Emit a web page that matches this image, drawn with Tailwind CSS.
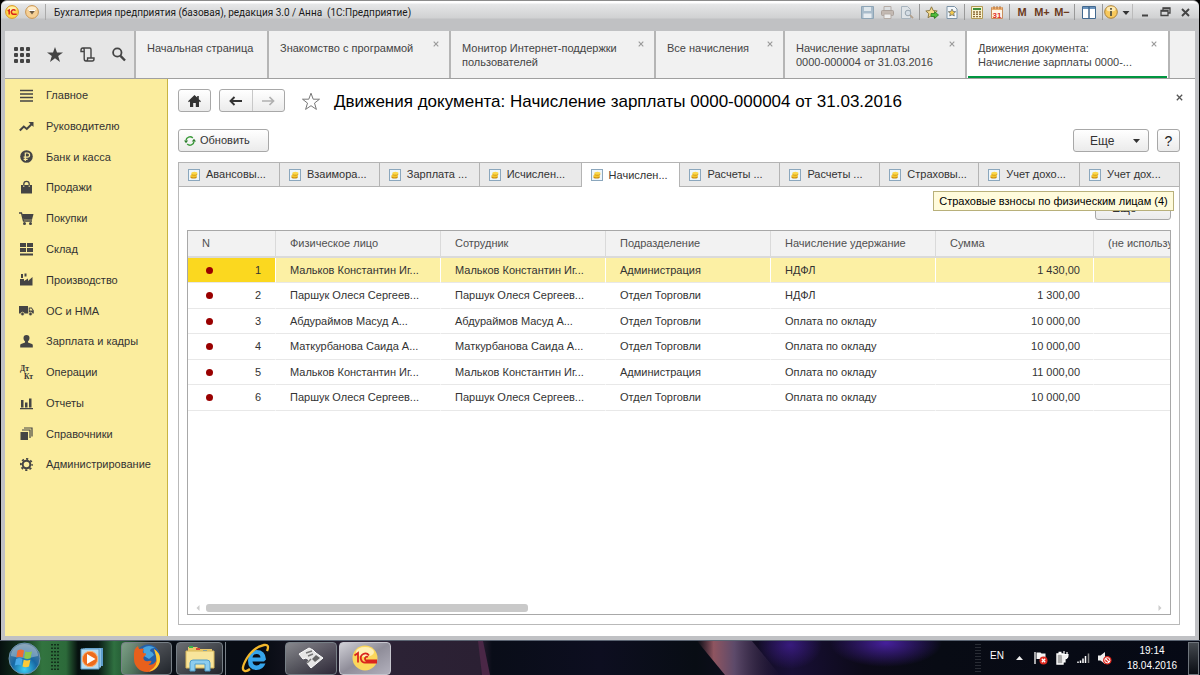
<!DOCTYPE html>
<html lang="ru">
<head>
<meta charset="utf-8">
<title>Бухгалтерия предприятия</title>
<script src="https://cdn.jsdelivr.net/npm/@tailwindcss/browser@4"></script>
</head>
<body class="flex h-screen flex-col overflow-hidden bg-black font-['Liberation_Sans',Arial,sans-serif] text-[11px] text-[#333]">

<svg class="hidden" aria-hidden="true">
  <symbol id="coins" viewBox="0 0 12 12"><rect x=".5" y=".5" width="11" height="11" fill="#eef6fb" stroke="#8ba7bd"/><ellipse cx="5.6" cy="8" rx="3.2" ry="1.6" fill="#c98a0c"/><ellipse cx="5.6" cy="6.8" rx="3.2" ry="1.6" fill="#f4c62e"/><ellipse cx="6.4" cy="5.2" rx="3" ry="1.4" fill="#c98a0c"/><ellipse cx="6.4" cy="4.2" rx="3" ry="1.5" fill="#fbd84a"/></symbol>
  <symbol id="close" viewBox="0 0 6 6"><path d="M.7 .7 5.3 5.3M5.3 .7 .7 5.3" stroke="currentColor" stroke-width="1.1" fill="none"/></symbol>
</svg>

<div class="mx-[1px] flex min-h-0 flex-1 flex-col rounded-t-md border-t border-[#8c8c8c] bg-[#c0c1c4]">
  <!-- title bar -->
  <header class="flex h-[30px] shrink-0 items-start rounded-t-md bg-[linear-gradient(to_bottom,#fff_0,#fff_2px,#e6e7e8_3px,#d0d1d2_17px,#c0c1c3_18px,#c0c1c3_30px)] pl-1 pr-1 text-[#1a1a1a]">
    <div class="flex h-[22px] flex-1 items-center">
      <button aria-label="Главное меню" class="flex w-5 justify-start"><svg width="14" height="14" viewBox="0 0 14 14"><circle cx="7" cy="7" r="6.4" fill="#ffd84a" stroke="#d99a2b"/><ellipse cx="7" cy="4" rx="4.5" ry="2.5" fill="#fff0a8"/><path d="M2.7 5.8 4.2 5v4.6M10.5 5.6A2.3 2.3 0 1 0 8 9.2h3.7" fill="none" stroke="#d8231c" stroke-width="1.5"/></svg></button>
      <button aria-label="Меню" class="flex w-5 justify-start"><svg width="14" height="14" viewBox="0 0 14 14"><circle cx="7" cy="7" r="6.4" fill="#f5cf94" stroke="#c89450"/><ellipse cx="7" cy="4" rx="4.5" ry="2.5" fill="#fdeccb"/><path d="M3.5 5h7L7 9.5z" fill="#6b5a45"/><path d="M4 5.5h6" stroke="#fff"/></svg></button>
      <span class="mr-2 h-4 w-px bg-[#aaa]"></span>
      <h1 class="whitespace-nowrap font-[Roboto,sans-serif] text-[10px]">Бухгалтерия предприятия (базовая), редакция 3.0 / Анна&nbsp; (1С:Предприятие)</h1>
    </div>
    <div class="flex h-[22px] items-center">
      <button aria-label="Сохранить" class="flex w-5 justify-center"><svg width="13" height="13" viewBox="0 0 13 13"><path d="M.5.5h12v12H.5z" fill="#a9bccb" stroke="#8ea5b6"/><path d="M3 1h7v4H3z" fill="#dfe7ec"/><path d="M2.5 7.5h8V12h-8z" fill="#e6ecf0"/></svg></button>
      <button aria-label="Печать" class="flex w-5 justify-center"><svg width="13" height="13" viewBox="0 0 13 13"><path d="M3 .5h7V5H3z" fill="#dce0e3" stroke="#b5aca6"/><rect x=".5" y="4.5" width="12" height="5" rx="1" fill="#c3b9b2" stroke="#aaa19b"/><path d="M3 8h7v4.5H3z" fill="#eee" stroke="#b5aca6"/></svg></button>
      <button aria-label="Просмотр" class="flex w-5 justify-center"><svg width="14" height="13" viewBox="0 0 14 13"><path d="M1.5.5h6l3 3v9h-9z" fill="#dfe4e8" stroke="#a8b4be"/><circle cx="8" cy="7" r="2.8" fill="#d4dde5" stroke="#98a5b0"/><path d="m10 9 3 3.2" stroke="#b3a08c" stroke-width="1.8"/></svg></button>
      <span class="mx-[2px] h-4 w-px bg-[#999]"></span>
      <button aria-label="Добавить в избранное" class="flex w-5 justify-center"><svg width="14" height="13" viewBox="0 0 14 13"><path d="m6.5.8 1.7 3.7 4 .5-3 2.700.8 4-3.500-2-3.500 2 .8-4-3-2.700 4-.5z" fill="#f7dc8d" stroke="#8b7842"/><path d="M6 7.500h3.500V5.500L13.500 9l-4 3.500v-2H6z" fill="#4fbb3a" stroke="#287a1d" stroke-width=".8"/></svg></button>
      <button aria-label="Избранное" class="flex w-5 justify-center"><svg width="12" height="13" viewBox="0 0 12 13"><path d="M1 .5h7.500L11 3v9.500H1z" fill="#f4f8fb" stroke="#7d94a8"/><path d="m6 3 1.100 2.400 2.600.3-2 1.700.6 2.600L6 8.700 3.700 10l.6-2.600-2-1.700 2.600-.3z" fill="#f3c94e" stroke="#57616b" stroke-width=".7"/></svg></button>
      <span class="mx-[2px] h-4 w-px bg-[#999]"></span>
      <button aria-label="Калькулятор" class="flex w-5 justify-center"><svg width="12" height="13" viewBox="0 0 12 13"><path d="M.5.500h11v12H.5z" fill="#fbf3cf" stroke="#b39a55"/><path d="M2 2h8v2H2z" fill="#3f8f3b"/><path d="M2 6h8M2 8.300h8M2 10.600h8" stroke="#8c6b3a" stroke-width="1.400" stroke-dasharray="2 1"/></svg></button>
      <button aria-label="Календарь" class="flex w-5 justify-center"><svg width="12" height="13" viewBox="0 0 12 13"><path d="M.5 1.500h11v11H.5z" fill="#fff6e6" stroke="#c88d5c"/><path d="M1 1h10v3H1z" fill="#edb071"/><path d="M3 0v3M6 0v3M9 0v3" stroke="#9a5b2c" stroke-width=".8"/><text x="6" y="11.500" text-anchor="middle" font-size="8" font-weight="bold" fill="#e0301e">31</text></svg></button>
      <span class="mx-[2px] h-4 w-px bg-[#999]"></span>
      <button class="w-5 text-[11px] font-bold text-[#6b3a1c]">M</button>
      <button class="w-5 text-[11px] font-bold text-[#6b3a1c]">M+</button>
      <button class="w-5 text-[11px] font-bold text-[#6b3a1c]">M−</button>
      <span class="mx-[2px] h-4 w-px bg-[#999]"></span>
      <button aria-label="Панели" class="flex w-6 justify-center"><svg width="14" height="13" viewBox="0 0 14 13"><path d="M.5.500h13v12H.5z" fill="#fff" stroke="#41688f"/><path d="M1 1h12v2H1z" fill="#6a93bd"/><path d="M7 1v12" stroke="#41688f" stroke-width="1.500"/></svg></button>
      <span class="mx-px h-4 w-px bg-[#999]"></span>
      <button aria-label="О программе" class="flex items-center gap-1"><svg width="14" height="14" viewBox="0 0 14 14"><circle cx="7" cy="7" r="6.300" fill="#f8c95c" stroke="#a9803a"/><ellipse cx="7" cy="4" rx="4.500" ry="2.500" fill="#fdeab4"/><path d="M7 3v1.800M7 6v5" stroke="#554" stroke-width="1.800"/></svg><svg width="8" height="8" viewBox="0 0 8 8"><path d="M.5 3h7L4 7z" fill="#333"/></svg></button>
      <span class="mx-[2px] h-4 w-px bg-[#bbb]"></span>
      <button aria-label="Свернуть" class="flex w-5 justify-center"><svg width="8" height="10" viewBox="0 0 8 10"><path d="M1 8.500h6" stroke="#444" stroke-width="2"/></svg></button>
      <button aria-label="Восстановить" class="flex w-5 justify-center"><svg width="11" height="10" viewBox="0 0 11 10"><path d="M3 3V1h7v5H8M1 3.500h7v5H1z" fill="none" stroke="#444" stroke-width="1.300"/><path d="M3 1.500h7M1 4h7" stroke="#444" stroke-width="1.500"/></svg></button>
      <button aria-label="Закрыть" class="flex w-5 justify-center"><svg width="9" height="9" viewBox="0 0 9 9"><path d="m1 1 7 7M8 1 1 8" stroke="#444" stroke-width="1.900"/></svg></button>
    </div>
  </header>

  <!-- window tabs -->
  <nav class="mx-1 flex h-12 shrink-0 border-b border-[#a0a0a0] bg-[#f1f1f1] text-[#444]">
    <div class="flex w-[131px] shrink-0 items-center gap-[17px] border-r-2 border-[#b5b5b5] bg-[#e6e6e6] pl-[9px] text-[#444]">
      <button aria-label="Все функции"><svg width="16" height="16" viewBox="0 0 16 16" fill="currentColor"><rect width="4" height="4" rx="1"/><rect x="6" width="4" height="4" rx="1"/><rect x="12" width="4" height="4" rx="1"/><rect y="6" width="4" height="4" rx="1"/><rect x="6" y="6" width="4" height="4" rx="1"/><rect x="12" y="6" width="4" height="4" rx="1"/><rect y="12" width="4" height="4" rx="1"/><rect x="6" y="12" width="4" height="4" rx="1"/><rect x="12" y="12" width="4" height="4" rx="1"/></svg></button>
      <button aria-label="Избранное"><svg width="16" height="15" viewBox="0 0 16 15"><path d="M8 0 10 5.400H16L11.200 8.900 13 15 8 11.300 3 15 4.800 8.900 0 5.400H6z" fill="currentColor"/></svg></button>
      <button aria-label="История"><svg width="15" height="15" viewBox="0 0 15 15"><path d="M3.500 4.500H1V3.200C1 1.800 1.700 1 2.800 1h7c.9 0 1.200.6 1.200 1.400V10.500M2.800 1C4 1 4.200 2 4.200 3v8.500c0 1.600.5 2.500 1.700 2.500h6.300c1.200 0 1.800-.8 1.800-2v-1H7.600v1c0 1.200-.6 2-1.700 2" fill="none" stroke="currentColor" stroke-width="1.400"/></svg></button>
      <button aria-label="Поиск"><svg width="14" height="15" viewBox="0 0 14 15"><circle cx="5.300" cy="5.500" r="4.200" fill="none" stroke="currentColor" stroke-width="1.800"/><path d="m8.500 8.800 4.500 4.700" stroke="currentColor" stroke-width="2.400"/></svg></button>
    </div>
    <a href="#" class="w-[133px] border-r-2 border-[#b5b5b5] pl-[11px] pt-[10px] leading-[14px]">Начальная страница</a>
    <div class="flex w-[182px] justify-between border-r-2 border-[#b5b5b5] pl-[11px] pr-[10px] pt-[10px] leading-[14px]"><a href="#">Знакомство с программой</a><button aria-label="Закрыть" class="self-start text-[#999]"><svg class="size-[6px]"><use href="#close"/></svg></button></div>
    <div class="flex w-[205px] justify-between border-r-2 border-[#b5b5b5] pl-[11px] pr-[10px] pt-[10px] leading-[14px]"><a href="#">Монитор Интернет-поддержки<br>пользователей</a><button aria-label="Закрыть" class="self-start text-[#999]"><svg class="size-[6px]"><use href="#close"/></svg></button></div>
    <div class="flex w-[129px] justify-between border-r-2 border-[#b5b5b5] pl-[11px] pr-[10px] pt-[10px] leading-[14px]"><a href="#">Все начисления</a><button aria-label="Закрыть" class="self-start text-[#999]"><svg class="size-[6px]"><use href="#close"/></svg></button></div>
    <div class="flex w-[182px] justify-between border-r-2 border-[#b5b5b5] pl-[11px] pr-[10px] pt-[10px] leading-[14px]"><a href="#">Начисление зарплаты<br>0000-000004 от 31.03.2016</a><button aria-label="Закрыть" class="self-start text-[#999]"><svg class="size-[6px]"><use href="#close"/></svg></button></div>
    <div class="flex w-[203px] border-r-2 border-[#b5b5b5] bg-white px-px"><div class="flex flex-1 justify-between border-b-2 border-[#009640] pl-[10px] pr-[10px] pt-[10px] leading-[14px]"><a href="#" class="whitespace-nowrap">Движения документа:<br>Начисление зарплаты 0000-...</a><button aria-label="Закрыть" class="self-start text-[#999]"><svg class="size-[6px]"><use href="#close"/></svg></button></div></div>
  </nav>

  <div class="mx-1 mb-1 flex min-h-0 flex-1">
    <!-- sections -->
    <aside class="w-[163px] shrink-0 border-r border-[#c9b443] bg-[#fbed9e] pt-px">
      <ul class="grid h-[400px] auto-rows-fr [&_a]:flex [&_a]:h-full [&_a]:items-center [&_a]:gap-3 [&_a]:pl-[14px] [&_svg]:size-[15px]">
        <li><a href="#"><svg viewBox="0 0 15 15"><path d="M1 2.500h13M1 6h13M1 9.500h13M1 13h13" stroke="#444" stroke-width="1.400"/></svg>Главное</a></li>
        <li><a href="#"><svg viewBox="0 0 15 15"><path d="m.8 11.500 4-4 3 2.500 5-5" fill="none" stroke="#444" stroke-width="2"/><path d="M9.500 3H14.500V8z" fill="#444"/></svg>Руководителю</a></li>
        <li><a href="#"><svg viewBox="0 0 15 15"><circle cx="7.500" cy="7.500" r="6.300" fill="#444"/><path d="M6.300 12V4h2.200a2 2 0 0 1 0 4.200H4.600M4.600 10.300h4" fill="none" stroke="#fbed9e" stroke-width="1.200"/></svg>Банк и касса</a></li>
        <li><a href="#"><svg viewBox="0 0 15 15"><path d="M2 5h11v8.500H2z" fill="#444"/><path d="M4.800 7V4a2.700 2.700 0 0 1 5.400 0v3" fill="none" stroke="#444" stroke-width="1.300"/><path d="M4.800 5.500V7M10.200 5.500V7" stroke="#fbed9e"/></svg>Продажи</a></li>
        <li><a href="#"><svg viewBox="0 0 15 15"><path d="M0 2h2.500L4.500 10H13" fill="none" stroke="#444" stroke-width="1.300"/><path d="M3 3h11.500L13 8.700H4.500z" fill="#444"/><circle cx="5.500" cy="12.500" r="1.500" fill="#444"/><circle cx="11.500" cy="12.500" r="1.500" fill="#444"/></svg>Покупки</a></li>
        <li><a href="#"><svg viewBox="0 0 15 15"><path d="M1 1h6v4H1zM8 1h6v4H8zM1 6h6v4H1zM8 6h6v4H8zM1 11.500h13v2H1z" fill="#444"/></svg>Склад</a></li>
        <li><a href="#"><svg viewBox="0 0 15 15"><path d="M1 13.500V7h4v2L9 6.500V9l4.500-4v8.500z" fill="#444"/><path d="M2 6h2V2H2zM5.500 4.500h2V1.500h-2z" fill="#444"/></svg>Производство</a></li>
        <li><a href="#"><svg viewBox="0 0 15 15"><path d="M0 3h9v7.500H0zM9.700 4.500h3L14.800 7.500v3H9.700z" fill="#444"/><path d="M10.700 5.500h1.700l1.200 2h-2.900z" fill="#fbed9e"/><circle cx="3.500" cy="11" r="1.800" fill="#444" stroke="#fbed9e" stroke-width=".7"/><circle cx="11.500" cy="11" r="1.800" fill="#444" stroke="#fbed9e" stroke-width=".7"/></svg>ОС и НМА</a></li>
        <li><a href="#"><svg viewBox="0 0 15 15"><path d="M7.500 1a3 3 0 0 1 3 3c0 1.500-.7 2.700-1.500 3.300v1.200l4 1.500c.6.300.8.800.8 1.500v2H1.200v-2c0-.7.2-1.200.8-1.500l4-1.500V7.300C5.200 6.700 4.500 5.500 4.500 4a3 3 0 0 1 3-3z" fill="#444"/></svg>Зарплата и кадры</a></li>
        <li><a href="#"><svg viewBox="0 0 15 15" font-family="Liberation Serif" font-weight="bold" font-size="7.500" fill="#333"><text x="1" y="6">Дт</text><text x="5" y="14">Кт</text></svg>Операции</a></li>
        <li><a href="#"><svg viewBox="0 0 15 15"><path d="M2 4h2.500v7.500H2zM6 6.500h2.500v5H6zM10 2.500h2.500v9H10zM1 12h13v1.300H1z" fill="#444"/></svg>Отчеты</a></li>
        <li><a href="#"><svg viewBox="0 0 15 15"><path d="M1.500 6h7.500v8H1.500z" fill="#444"/><path d="M3 4h8v8M5 2h8v8.500" fill="none" stroke="#444" stroke-width="1.200"/></svg>Справочники</a></li>
        <li><a href="#"><svg viewBox="0 0 15 15"><circle cx="7.500" cy="7.500" r="3.800" fill="none" stroke="#444" stroke-width="2"/><circle cx="7.500" cy="7.500" r="5.600" fill="none" stroke="#444" stroke-width="1.800" stroke-dasharray="2.200 2.198" stroke-dashoffset="1.100"/></svg>Администрирование</a></li>
      </ul>
    </aside>

    <!-- document form -->
    <main class="flex min-w-0 flex-1 flex-col bg-white pb-[11px] pl-[10px] pr-[15px] pt-[10px]">
      <div class="flex h-[23px] shrink-0 items-center">
        <button aria-label="Домой" class="flex h-[23px] w-[33px] items-center justify-center rounded-[3px] border border-[#a8a8a8] bg-linear-to-b from-white to-[#ebebeb]"><svg width="13" height="12" viewBox="0 0 13 12"><path d="M6.500 0 0 6.300l1 .9 1-.9V12h3.200V8h2.600v4H11V6.300l1 .9 1-.9-2.200-2.100V1H9.200v1.600z" fill="#333"/></svg></button>
        <div class="ml-2 flex h-[23px] w-[66px] rounded-[3px] border border-[#a8a8a8] bg-linear-to-b from-white to-[#ebebeb]">
          <button aria-label="Назад" class="flex flex-1 items-center justify-center border-r border-[#c8c8c8]"><svg width="13" height="10" viewBox="0 0 13 10"><path d="M1.500 5H13M5.500 1l-4 4 4 4" fill="none" stroke="#333" stroke-width="1.900"/></svg></button>
          <button aria-label="Вперед" class="flex flex-1 items-center justify-center"><svg width="13" height="10" viewBox="0 0 13 10"><path d="M0 5h11.500M7.500 1l4 4-4 4" fill="none" stroke="#b0b0b0" stroke-width="1.700"/></svg></button>
        </div>
        <button aria-label="В избранное" class="ml-4 pt-[2px]"><svg width="20" height="19" viewBox="0 0 20 19"><path d="m10 1.200 2.200 6h6.300l-5 3.900 1.900 6.300L10 13.700l-5.400 3.700 1.900-6.300-5-3.900h6.300z" fill="#fff" stroke="#777"/></svg></button>
        <h2 class="ml-[13px] flex-1 whitespace-nowrap pt-[3px] text-[17px] text-black">Движения документа: Начисление зарплаты 0000-000004 от 31.03.2016</h2>
        <button aria-label="Закрыть форму" class="-mr-[3px] mb-[6px] text-[#555]"><svg class="size-[7px]"><use href="#close"/></svg></button>
      </div>

      <div class="mt-[17px] flex h-[23px] shrink-0 items-center">
        <button class="flex h-[23px] w-[91px] items-center gap-1 rounded-[3px] border border-[#a8a8a8] bg-linear-to-b from-white to-[#ebebeb] pl-[5px]"><svg width="12" height="12" viewBox="0 0 12 12"><path d="M2 5.500A4 4 0 0 1 8.800 3M10 6.500A4 4 0 0 1 3.200 9" fill="none" stroke="#3b9a3a" stroke-width="1.500"/><path d="M0 5.500h4.200L2 8.300zM12 6.500H7.800L10 3.700z" fill="#2c7d2d"/></svg>Обновить</button>
        <button class="ml-auto flex h-[23px] w-[76px] items-center justify-between rounded-[3px] border border-[#a8a8a8] bg-linear-to-b from-white to-[#ebebeb] pl-4 pr-2 text-xs">Еще<svg width="7" height="4" viewBox="0 0 7 4"><path d="M0 0h7L3.500 4z" fill="#333"/></svg></button>
        <button aria-label="Справка" class="ml-2 h-[23px] w-[23px] rounded-[3px] border border-[#a8a8a8] bg-linear-to-b from-white to-[#ebebeb] text-sm leading-5 text-[#222]">?</button>
      </div>

      <div class="mt-[10px] grid h-[25px] shrink-0 grid-cols-[101fr_100fr_100fr_102fr_99fr_100fr_100fr_99fr_101fr_100fr] border-l border-[#b4b4b4] [&_button]:flex [&_button]:items-center [&_button]:gap-[6px] [&_button]:overflow-hidden [&_button]:whitespace-nowrap [&_button]:border-r [&_button]:border-t [&_button]:border-[#b4b4b4] [&_button]:pl-[9px] [&_svg]:size-3 [&_svg]:shrink-0" role="tablist">
        <button role="tab" class="border-b bg-[#eaeaea]"><svg><use href="#coins"/></svg>Авансовы...</button>
        <button role="tab" class="border-b bg-[#eaeaea]"><svg><use href="#coins"/></svg>Взаимора...</button>
        <button role="tab" class="border-b bg-[#eaeaea]"><svg><use href="#coins"/></svg>Зарплата ...</button>
        <button role="tab" class="border-b bg-[#eaeaea]"><svg><use href="#coins"/></svg>Исчислен...</button>
        <button role="tab" aria-selected="true" class="bg-white"><svg><use href="#coins"/></svg>Начислен...</button>
        <button role="tab" class="border-b bg-[#eaeaea]"><svg><use href="#coins"/></svg>Расчеты ...</button>
        <button role="tab" class="border-b bg-[#eaeaea]"><svg><use href="#coins"/></svg>Расчеты ...</button>
        <button role="tab" class="border-b bg-[#eaeaea]"><svg><use href="#coins"/></svg>Страховы...</button>
        <button role="tab" class="border-b bg-[#eaeaea]"><svg><use href="#coins"/></svg>Учет дохо...</button>
        <button role="tab" class="border-b bg-[#eaeaea]"><svg><use href="#coins"/></svg>Учет дох...</button>
      </div>

      <section class="relative flex min-h-0 flex-1 flex-col border-x border-b border-[#b9b9b9] px-2 pb-[9px] pt-[9px]">
        <div role="tooltip" class="absolute right-[5px] top-1 z-10 w-[241px] whitespace-nowrap border border-[#b8b07a] bg-[#fffbdc] text-center leading-[18px] text-black">Страховые взносы по физическим лицам (4)</div>
        <button class="flex h-6 w-[76px] items-center self-end rounded-[3px] border border-[#a8a8a8] bg-linear-to-b from-white to-[#ebebeb] pl-4 text-xs">Еще</button>
        <div class="mt-[10px] flex min-h-0 flex-1 flex-col overflow-hidden border border-[#a8a8a8]">
          <div class="min-h-0 flex-1 overflow-hidden">
            <table class="w-[1106px] table-fixed border-separate border-spacing-0 text-left [&_td]:border-b [&_td]:border-b-[#e8e8e8] [&_td]:border-r [&_td]:border-r-white [&_td]:pl-[14px] [&_th]:border-b-2 [&_th]:border-r [&_th]:border-[#dadada] [&_th]:bg-[#f2f2f2] [&_th]:pl-[14px] [&_th]:font-normal [&_th]:text-[#505050]">
              <colgroup><col class="w-[88px]"><col class="w-[165px]"><col class="w-[165px]"><col class="w-[165px]"><col class="w-[165px]"><col class="w-[158px]"><col class="w-[200px]"></colgroup>
              <thead><tr class="h-[27px]"><th>N</th><th>Физическое лицо</th><th>Сотрудник</th><th>Подразделение</th><th>Начисление удержание</th><th>Сумма</th><th>(не используется)</th></tr></thead>
              <tbody class="[&>tr]:h-[25px] [&>tr:nth-child(even)]:h-[26px] [&_i]:size-[7px] [&_i]:rounded-full [&_i]:bg-[#990000]">
                <tr class="bg-[#fcf0a4]"><td class="bg-[#fbd81f]"><div class="flex items-center justify-between pl-1 pr-[14px]"><i></i>1</div></td><td>Мальков Константин Иг...</td><td>Мальков Константин Иг...</td><td>Администрация</td><td>НДФЛ</td><td><div class="pr-[13px] text-right">1 430,00</div></td><td></td></tr>
                <tr><td><div class="flex items-center justify-between pl-1 pr-[14px]"><i></i>2</div></td><td>Паршук Олеся Сергеев...</td><td>Паршук Олеся Сергеев...</td><td>Отдел Торговли</td><td>НДФЛ</td><td><div class="pr-[13px] text-right">1 300,00</div></td><td></td></tr>
                <tr><td><div class="flex items-center justify-between pl-1 pr-[14px]"><i></i>3</div></td><td>Абдураймов Масуд А...</td><td>Абдураймов Масуд А...</td><td>Отдел Торговли</td><td>Оплата по окладу</td><td><div class="pr-[13px] text-right">10 000,00</div></td><td></td></tr>
                <tr><td><div class="flex items-center justify-between pl-1 pr-[14px]"><i></i>4</div></td><td>Маткурбанова Саида А...</td><td>Маткурбанова Саида А...</td><td>Отдел Торговли</td><td>Оплата по окладу</td><td><div class="pr-[13px] text-right">10 000,00</div></td><td></td></tr>
                <tr><td><div class="flex items-center justify-between pl-1 pr-[14px]"><i></i>5</div></td><td>Мальков Константин Иг...</td><td>Мальков Константин Иг...</td><td>Администрация</td><td>Оплата по окладу</td><td><div class="pr-[13px] text-right">11 000,00</div></td><td></td></tr>
                <tr><td><div class="flex items-center justify-between pl-1 pr-[14px]"><i></i>6</div></td><td>Паршук Олеся Сергеев...</td><td>Паршук Олеся Сергеев...</td><td>Отдел Торговли</td><td>Оплата по окладу</td><td><div class="pr-[13px] text-right">10 000,00</div></td><td></td></tr>
              </tbody>
            </table>
          </div>
          <div class="mb-[2px] flex h-2 shrink-0 items-center gap-[6px] px-2">
            <svg width="4" height="6" viewBox="0 0 4 6"><path d="M3.500 0v6L.5 3z" fill="#ccc"/></svg>
            <div class="flex-1"><div class="h-2 w-[34%] rounded-[3px] bg-[#c9c9c9]"></div></div>
            <svg width="4" height="6" viewBox="0 0 4 6"><path d="M.5 0v6l3-3z" fill="#ccc"/></svg>
          </div>
        </div>
      </section>
    </main>
  </div>
</div>

<!-- taskbar -->
<footer class="relative flex h-[35px] shrink-0 items-center border-t border-[#5b6472] bg-[#080c16] text-white">
  <svg class="absolute inset-0 size-full" viewBox="0 0 1200 34" preserveAspectRatio="none" aria-hidden="true">
    <defs>
      <linearGradient id="wall"><stop offset="0" stop-color="#06100f"/><stop offset=".02" stop-color="#14361f"/><stop offset=".035" stop-color="#32743f"/><stop offset=".055" stop-color="#2c6a3a"/><stop offset=".065" stop-color="#06100f"/><stop offset=".082" stop-color="#0a1c16"/><stop offset=".095" stop-color="#2f7040"/><stop offset=".11" stop-color="#1c4a2b"/><stop offset=".125" stop-color="#080d14"/><stop offset=".22" stop-color="#080c14"/><stop offset=".3" stop-color="#2c2336"/><stop offset=".4" stop-color="#2b2033"/><stop offset=".41" stop-color="#090d18"/><stop offset=".5" stop-color="#0d0e20"/><stop offset=".58" stop-color="#080d14"/><stop offset=".63" stop-color="#120d24"/><stop offset=".66" stop-color="#180f36"/><stop offset=".72" stop-color="#0c0a18"/><stop offset=".78" stop-color="#080b14"/><stop offset="1" stop-color="#060915"/></linearGradient>
      <radialGradient id="violet"><stop offset="0" stop-color="#46209c"/><stop offset="1" stop-color="#46209c" stop-opacity="0"/></radialGradient>
      <linearGradient id="ray"><stop offset="0" stop-color="#7d4552" stop-opacity="0"/><stop offset=".2" stop-color="#8f5560"/><stop offset=".45" stop-color="#5d4a6a"/><stop offset="1" stop-color="#3c2a50" stop-opacity="0"/></linearGradient>
    </defs>
    <rect width="1200" height="34" fill="url(#wall)"/>
    <path d="M478 0h5l7 34h-8z" fill="#4a2746"/>
    <path d="M697 0h55l28 34h-55z" fill="url(#ray)"/>
    <ellipse cx="790" cy="4" rx="32" ry="24" fill="url(#violet)" opacity=".7"/>
    <ellipse cx="886" cy="2" rx="56" ry="24" fill="url(#violet)"/>
  </svg>
  <div class="relative flex h-full flex-1 items-center [&_button]:flex [&_button]:h-[33px] [&_button]:items-center [&_button]:justify-center">
    <button aria-label="Пуск" class="w-12"><svg width="33" height="33" viewBox="0 0 33 33"><defs><radialGradient id="orb" cx=".5" cy=".85" r=".8"><stop offset="0" stop-color="#3cd0f5"/><stop offset=".5" stop-color="#1768a4"/><stop offset="1" stop-color="#5c7f9b"/></radialGradient></defs><circle cx="16.500" cy="16.500" r="15.500" fill="url(#orb)" stroke="#6d93ad"/><path d="M3 14a13.500 12 0 0 1 27 0q-14 4-27 0" fill="#fff" opacity=".3"/><path d="M9.500 8.500q3.500-2 6.500 0l-1.300 7q-3-1.700-6.400 0z" fill="#ee6a33"/><path d="M17.300 9.200q3.200 1.700 6.700 0l-1.400 7q-3.200 1.600-6.500 0z" fill="#8cc84b"/><path d="M8 17q3.500-1.800 6.500 0L13.300 23.500q-3-1.700-6.500 0z" fill="#48a8e8"/><path d="M15.700 17.700q3.300 1.600 6.700 0L21 24.500q-3.200 1.600-6.500 0z" fill="#fcc938"/></svg></button>
    <svg class="mx-[3px]" width="8" height="28" viewBox="0 0 8 28"><path d="M1 0v28M4 0v28M7 0v28" stroke="#0b1d12" stroke-width="1.500" stroke-dasharray="1.500 2"/></svg>
    <button aria-label="Медиаплеер" class="w-[59px]"><svg width="24" height="24" viewBox="0 0 24 24"><path d="M5 2h18v18H5z" fill="#5d9dcc"/><path d="M3 2.500h18v19H3z" fill="#8fc3e6"/><path d="M1 3h18v20H1z" fill="#b7dcf2" stroke="#5e9cc7"/><circle cx="10" cy="13" r="7.700" fill="#ee6c1d" stroke="#fbb578"/><path d="M7 8v10l8.500-5z" fill="#fff"/></svg></button>
    <button aria-label="Firefox" class="w-[51px] rounded-sm border border-[#777f86] bg-linear-to-br from-white/40 to-white/10"><svg width="28" height="28" viewBox="0 0 28 28"><circle cx="15" cy="12.500" r="12" fill="#245fa8"/><path d="M10 4q6-4 12 0-5 0-5 3 3 1 4 4l-5 4-5-3z" fill="#47a3de"/><path d="M1.500 6Q3 3 5 2q0 2 1.500 3Q9 4 11 5q-2 2-1 4l3 .500q.500 1.500-1.500 2.500-1.500 1-1 3 1.500 3 5 2 2-.7 3 0 0 2-3 3.500 5 1 7.500-3.500Q25 12 21 5q6 4 6 10A13 13 0 0 1 1 15Q.5 10 1.500 6z" fill="#e8601c"/><path d="M21 5q6 4 6 10a12.500 12.500 0 0 1-11 12.500Q26 22 23 12z" fill="#fbc832"/></svg></button>
    <div class="ml-1 flex h-[33px] w-[50px] border-r border-[#777f86]"><button aria-label="Проводник" class="w-[47px] rounded-sm border border-[#777f86] bg-linear-to-br from-white/40 to-white/10"><svg width="30" height="28" viewBox="0 0 30 28"><path d="M3 3h9l2 2h13v18H3z" fill="#e9c96a"/><path d="M4 2h4v2H4z" fill="#36b44a"/><path d="M11 4h4v2h-4z" fill="#d84a3a"/><path d="M18 6h4v2h-4z" fill="#3b8bd8"/><path d="M1 7h28v17H1z" fill="#f8e59b" stroke="#d9b95a"/><path d="M5 27v-8q0-3 3-3h14q3 0 3 3v8h-5v-7H10v7z" fill="#8dcdee" stroke="#4f9cc9"/></svg></button></div>
    <button aria-label="Internet Explorer" class="w-[59px]"><svg width="30" height="30" viewBox="0 0 30 30"><path d="M23 18.500H11.500q.5 4 4.200 4 2.500 0 3.500-2h5.300Q22 27 15.500 27 7 27 7 17.500T15.500 7Q24.500 7 25 16.500zM11.500 14.500h8q-.300-3.500-3.800-3.500t-4.200 3.500z" fill="#36a5ea"/><path d="M26 8Q29 1 23 2 13 4 6 15-1 27 4 28q2 .500 5-2" fill="none" stroke="#f2b72c" stroke-width="2.300"/></svg></button>
    <button aria-label="Терминал" class="w-[52px] rounded-sm border border-[#777f86] bg-linear-to-br from-white/50 to-white/5"><svg width="26" height="22" viewBox="0 0 26 22"><path d="M1 7 11 1l4 2 3 3 7 5-12 10-4-5 2-3-3-2-3 1z" fill="#e6e6e6" stroke="#fff"/><path d="m8 6 6-2M10 9l5-2M9 16l4-4" stroke="#777" stroke-width="1.500"/><path d="m14 12 4-4 4 3-5 4z" fill="#666"/></svg></button>
    <button aria-label="1С:Предприятие" class="ml-[2px] w-[52px] rounded-sm border border-[#c5c5cd] bg-linear-to-br from-[#d0d0d6] via-[#8f8d99] to-[#b2b0bc]"><svg width="26" height="26" viewBox="0 0 26 26"><circle cx="13" cy="13" r="12.500" fill="#fbd75b"/><ellipse cx="13" cy="7" rx="9" ry="5" fill="#fff0b5"/><path d="M2.500 10.500 6 8v9.500M17 10.500a4.500 4.500 0 1 0-3 7h11M16 12a2 2 0 1 0-2 3.500h11" fill="none" stroke="#da251d" stroke-width="1.800"/></svg></button>
  </div>
  <div class="relative flex h-full items-center text-[10px]">
    <svg width="6" height="28" viewBox="0 0 6 28"><path d="M1 0v28M3 0v28M5 0v28" stroke="#4a4f55" stroke-dasharray="1 2"/></svg>
    <button class="mb-[6px] ml-2 w-4">EN</button>
    <button aria-label="Скрытые значки" class="ml-[11px]"><svg width="7" height="4" viewBox="0 0 7 4"><path d="M0 4h7L3.500 0z" fill="#eee"/></svg></button>
    <div class="ml-[11px] flex items-center gap-2">
      <svg width="14" height="14" viewBox="0 0 14 14"><path d="M1 1v12" stroke="#ddd" stroke-width="1.500"/><path d="M2.500 1.500h4l1 1h4V8h-9z" fill="#f4f4f4"/><circle cx="9.500" cy="9.500" r="4" fill="#e02a20"/><path d="m7.800 7.800 3.400 3.400M11.200 7.800 7.800 11.200" stroke="#fff" stroke-width="1.300"/></svg>
      <svg width="13" height="14" viewBox="0 0 13 14"><path d="M1 3h6v10H1zM2.500 1.500h3" fill="#aaa" stroke="#fff" stroke-width="1.400"/><path d="M8 0v3M11 1v3M5.500 3.500h6.500q0 4-3 4.500v3H7" fill="#eee" stroke="#fff" stroke-width="1.200"/></svg>
      <svg width="13" height="12" viewBox="0 0 13 12"><path d="M1 9.500V11M3.500 8.500V11M6 6.500V11M8.500 4V11" stroke="#fff" stroke-width="1.500"/><path d="M11.500 1.500V11" stroke="#888" stroke-width="1.500"/></svg>
      <svg width="14" height="14" viewBox="0 0 14 14"><path d="M0 4.500h2.500L7 1v12L2.500 9.500H0z" fill="#eee"/><circle cx="9.300" cy="9.300" r="3.500" fill="#e02a20" stroke="#e02a20" stroke-width="1.500"/><circle cx="9.300" cy="9.300" r="2.600" fill="none" stroke="#fff"/><path d="m7.500 7.500 3.600 3.600" stroke="#fff" stroke-width="1.200"/></svg>
    </div>
    <time class="ml-[13px] mr-[9px] w-[54px] text-center leading-[15px]">19:14<br>18.04.2016</time>
    <button aria-label="Показать рабочий стол" class="mr-px h-[33px] w-[11px] border border-[#6f757c] bg-linear-to-b from-[#454a50] to-[#0b0e14]"></button>
  </div>
</footer>
</body>
</html>
